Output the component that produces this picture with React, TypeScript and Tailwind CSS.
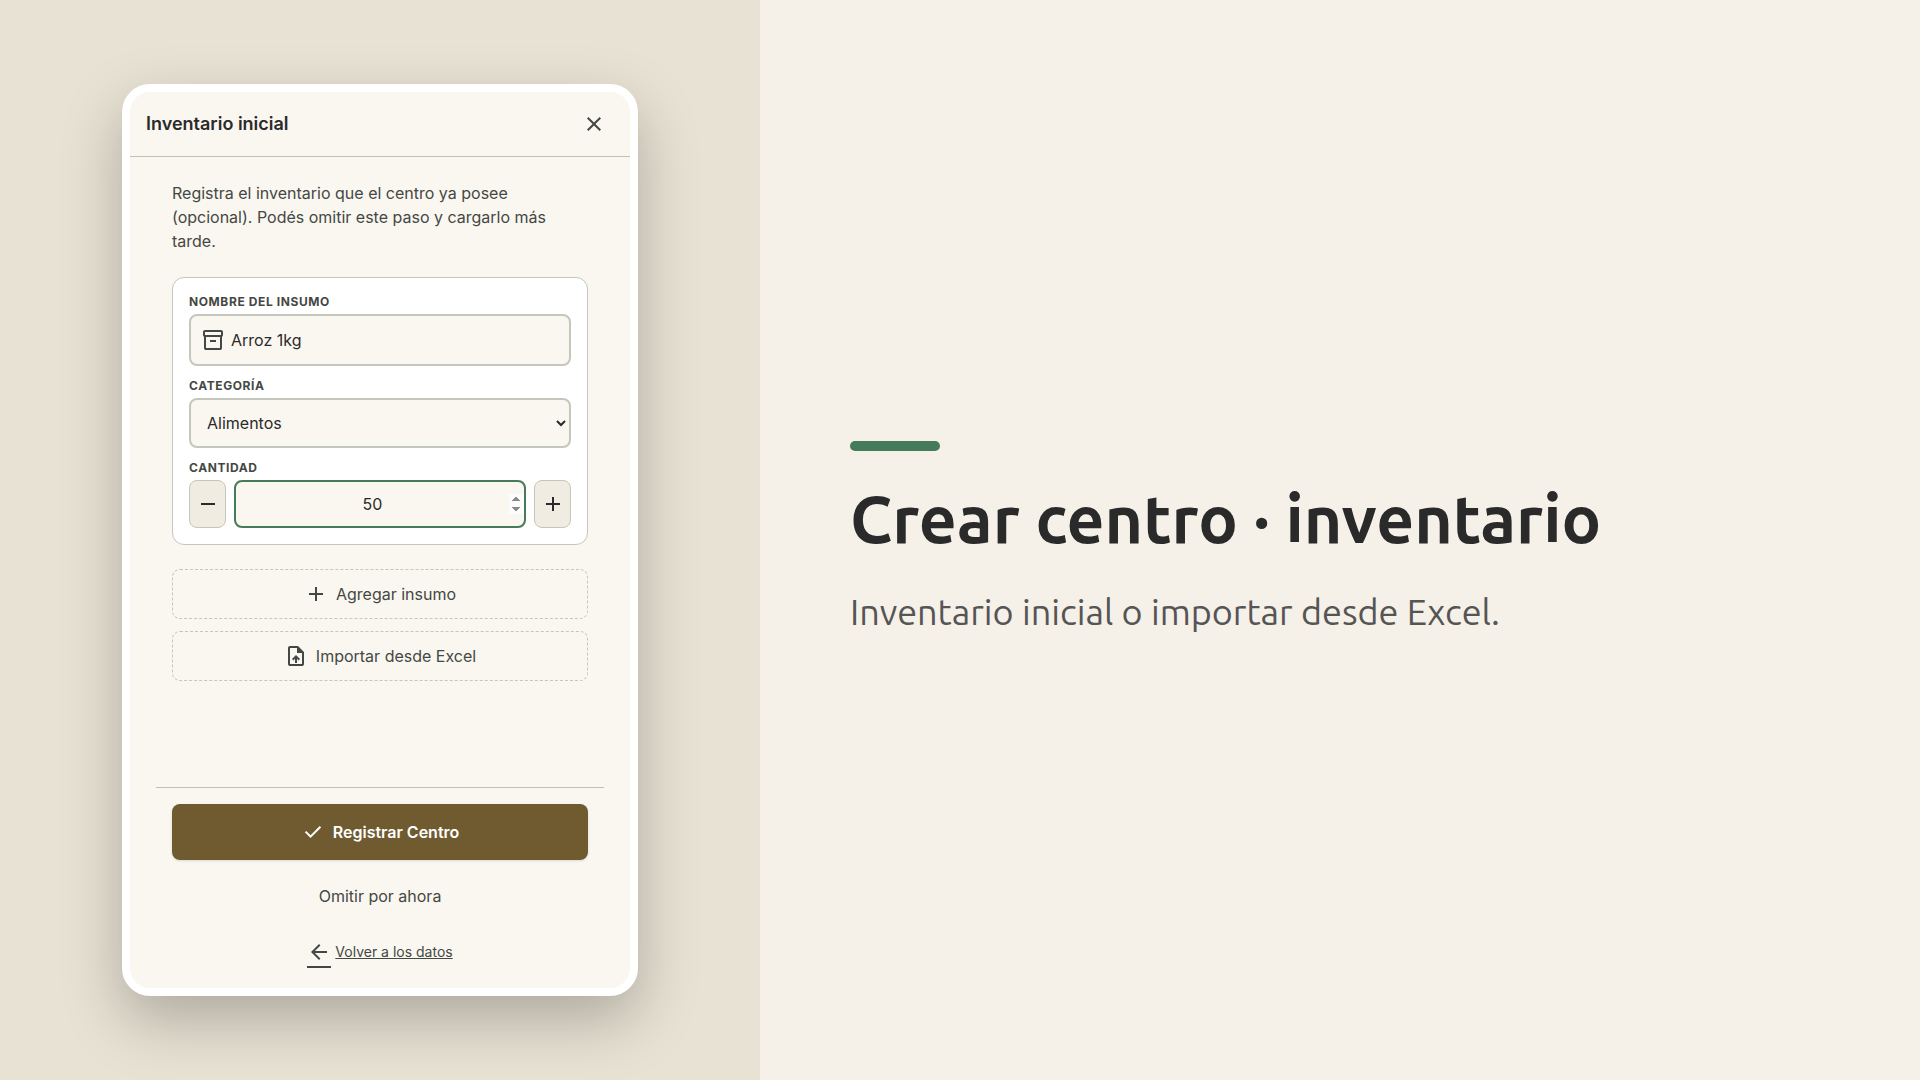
import { useState } from "react";
import type { ReactNode } from "react";

const paths = {
  close: "M6.4 19 5 17.6 10.6 12 5 6.4 6.4 5 12 10.6 17.6 5 19 6.4 13.4 12 19 17.6 17.6 19 12 13.4 6.4 19Z",
  inventory:
    "M3 22V8.725q-.45-.275-.725-.712Q2 7.575 2 7V4q0-.825.587-1.412Q3.175 2 4 2h16q.825 0 1.413.588Q22 3.175 22 4v3q0 .575-.275 1.013-.275.437-.725.712V20q0 .825-.587 1.413Q19.825 22 19 22H5q-.825 0-1.412-.587Q3 20.825 3 20V8.725ZM5 9v11h14V9H5ZM4 7h16V4H4v3Zm5 7h6v-2H9v2Z",
  add: "M11 19v-6H5v-2h6V5h2v6h6v2h-6v6h-2Z",
  remove: "M5 13v-2h14v2H5Z",
  upload:
    "M11 19h2v-4.175l1.6 1.6L16 15l-4-4-4 4 1.425 1.4L11 14.825V19ZM6 22q-.825 0-1.412-.587Q4 20.825 4 20V4q0-.825.588-1.412Q5.175 2 6 2h8l6 6v12q0 .825-.587 1.413Q18.825 22 18 22H6Zm7-13V4H6v16h12V9h-5Z",
  check: "M9.55 18l-5.7-5.7 1.425-1.425L9.55 15.15l9.175-9.175L20.15 7.4 9.55 18Z",
  back: "M7.825 13l5.6 5.6L12 20l-8-8 8-8 1.425 1.4-5.6 5.6H20v2H7.825Z",
};

function Icon({ name, className = "size-6" }: { name: keyof typeof paths; className?: string }) {
  return (
    <svg viewBox="0 0 24 24" fill="currentColor" aria-hidden="true" className={`shrink-0 ${className}`}>
      <path d={paths[name]} />
      {name === "upload" && <path d="M13 4v5h5Z" />}
    </svg>
  );
}

function Field({ id, label, children }: { id: string; label: string; children: ReactNode }) {
  return (
    <div className="flex flex-col gap-1">
      <label htmlFor={id} className="text-xs font-bold tracking-wider text-[#444844] uppercase">
        {label}
      </label>
      {children}
    </div>
  );
}

function StepButton({ label, icon, onClick }: { label: string; icon: "add" | "remove"; onClick: () => void }) {
  return (
    <button
      type="button"
      aria-label={label}
      onClick={onClick}
      className="flex w-[37px] items-center justify-center rounded-lg border border-[#c4c7bc] bg-[#f0ece2] text-[#2a2a2a]"
    >
      <Icon name={icon} />
    </button>
  );
}

function DashedButton({ icon, children }: { icon: "add" | "upload"; children: ReactNode }) {
  return (
    <button
      type="button"
      className="flex items-center justify-center gap-2 rounded-lg border border-dashed border-[#c4c7bc] py-3"
    >
      <Icon name={icon} />
      {children}
    </button>
  );
}

export default function App() {
  const [name, setName] = useState("Arroz 1kg");
  const [quantity, setQuantity] = useState(50);

  return (
    <div className="grid min-h-screen grid-cols-[19fr_29fr] bg-[#f5f0e8]">
      <section className="flex items-center justify-center bg-[#e8e2d4] py-[84px]">
        <div className="flex w-full max-w-[516px] flex-col self-stretch overflow-hidden rounded-[28px] border-8 border-white bg-[#faf7f0] font-['Inter',sans-serif] text-base text-[#444844] shadow-[0_24px_60px_rgba(0,0,0,0.25)]">
          <header className="flex h-[65px] items-center justify-between border-b border-[#bcc2b6] px-4">
            <h2 className="text-lg font-semibold text-[#2a2a2a]">Inventario inicial</h2>
            <button type="button" aria-label="Cerrar" className="p-2">
              <Icon name="close" />
            </button>
          </header>

          <form className="flex flex-1 flex-col px-[26px]" onSubmit={(e) => e.preventDefault()}>
            <div className="flex flex-1 flex-col gap-6 px-4 py-6">
              <p>
                Registra el inventario que el centro ya posee (opcional). Podés omitir este paso y cargarlo más tarde.
              </p>

              <div className="flex flex-col gap-3 rounded-xl border border-[#c4c7bc] bg-white p-4">
                <Field id="nombre" label="Nombre del insumo">
                  <div className="relative flex">
                    <span className="pointer-events-none absolute inset-y-0 left-3 flex items-center">
                      <Icon name="inventory" />
                    </span>
                    <input
                      id="nombre"
                      value={name}
                      onChange={(e) => setName(e.target.value)}
                      className="w-full rounded-lg border-2 border-[#c4c7bc] bg-[#faf7f0] py-3 pl-10 text-[#2a2a2a]"
                    />
                  </div>
                </Field>

                <Field id="categoria" label="Categoría">
                  <select
                    id="categoria"
                    className="h-[50px] w-full rounded-lg border-2 border-[#c4c7bc] bg-[#faf7f0] pl-3 text-[#2a2a2a]"
                  >
                    <option>Alimentos</option>
                  </select>
                </Field>

                <Field id="cantidad" label="Cantidad">
                  <div className="flex gap-2">
                    <StepButton label="Restar" icon="remove" onClick={() => setQuantity(quantity - 1)} />
                    <input
                      id="cantidad"
                      type="number"
                      value={quantity}
                      onChange={(e) => setQuantity(Number(e.target.value))}
                      className="h-12 min-w-0 flex-1 rounded-lg border-2 border-[#457b58] bg-[#faf7f0] text-center text-[#2a2a2a] [&::-webkit-inner-spin-button]:opacity-100"
                    />
                    <StepButton label="Sumar" icon="add" onClick={() => setQuantity(quantity + 1)} />
                  </div>
                </Field>
              </div>

              <div className="flex flex-col gap-3">
                <DashedButton icon="add">Agregar insumo</DashedButton>
                <DashedButton icon="upload">Importar desde Excel</DashedButton>
              </div>
            </div>

            <footer className="flex flex-col items-center gap-3 border-t border-[#bcc2b6] px-4 py-4">
              <button
                type="submit"
                className="flex w-full items-center justify-center gap-2 rounded-lg bg-[#705b30] py-4 font-semibold text-white shadow-sm"
              >
                <Icon name="check" />
                Registrar Centro
              </button>
              <button type="button" className="w-full py-3">
                Omitir por ahora
              </button>
              <a href="#datos" className="flex h-10 items-center gap-1 text-sm underline">
                <span className="border-b-2 border-[#444844] pt-1 pb-0.5">
                  <Icon name="back" />
                </span>
                Volver a los datos
              </a>
            </footer>
          </form>
        </div>
      </section>

      <section className="flex flex-col justify-center px-[90px] font-['Ubuntu','Noto_Sans',sans-serif]">
        <div className="h-2.5 w-[90px] rounded-full bg-[#457b58]" />
        <h1 className="mt-[30px] text-[66px] leading-[74px] font-bold text-[#2a2a2a]">Crear centro · inventario</h1>
        <p className="mt-[30px] text-[36px] leading-[54px] font-normal text-[#555555]">
          Inventario inicial o importar desde Excel.
        </p>
      </section>
    </div>
  );
}
